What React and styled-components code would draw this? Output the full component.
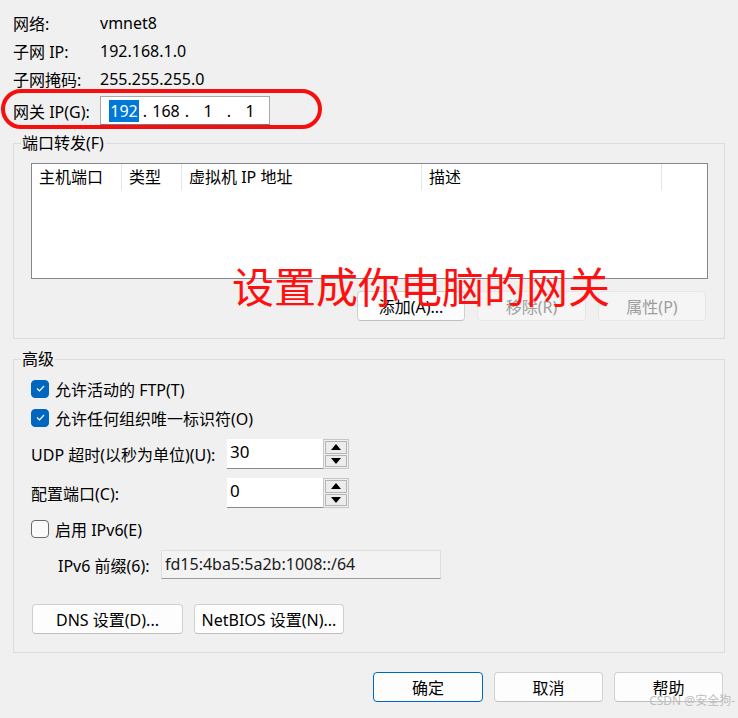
import React from "react";
import styled, { createGlobalStyle } from "styled-components";

const GlobalStyle = createGlobalStyle`
  html, body {
    margin: 0;
    padding: 0;
    background: #f0f0f0;
  }
  body {
    font-family: "Noto Sans", "Noto Sans CJK SC", sans-serif;
    font-size: 16px;
    color: #000;
  }
`;

const Window = styled.div`
  position: relative;
  width: 738px;
  height: 718px;
  box-sizing: border-box;
  padding: 9px 13px 0 13px;
  background: #f0f0f0;
  overflow: hidden;
`;

/** 상단 정보 영역 */
const InfoGrid = styled.div`
  display: grid;
  grid-template-columns: 87px auto;
  grid-auto-rows: 28px;
  align-items: center;
`;

const GatewayRow = styled.div`
  display: grid;
  grid-template-columns: 87px auto;
  align-items: center;
  height: 29px;
  margin-top: 3px;
`;

const IpField = styled.div`
  width: 170px;
  height: 29px;
  box-sizing: border-box;
  background: #fff;
  border: 1px solid #a8a8a8;
  border-bottom-color: #7a7a7a;
  display: flex;
  align-items: center;
  padding-left: 6px;
`;

const IpSeg = styled.span`
  width: 34px;
  text-align: center;
  line-height: 20px;
`;

const IpDot = styled.span`
  width: 8px;
  text-align: center;
  line-height: 20px;
`;

const Selected = styled.span`
  background: #0078d7;
  color: #fff;
  padding: 0 1px;
`;

/** 그룹 박스 */
const Group = styled.fieldset`
  margin: ${(p) => p.$top}px 0 0 0;
  padding: 0;
  border: 1px solid #dcdcdc;
  min-width: 0;

  legend {
    margin-left: 7px;
    padding: 0 1px;
    line-height: 20px;
  }
`;

const GroupBody = styled.div`
  padding: ${(p) => p.$pad};
`;

const ListView = styled.div`
  height: 116px;
  box-sizing: border-box;
  background: #fff;
  border: 1px solid #86868e;
`;

const ListHead = styled.div`
  display: flex;
  height: 26px;
`;

const HeadCell = styled.div`
  width: ${(p) => p.$w}px;
  box-sizing: border-box;
  padding-left: 7px;
  border-right: 1px solid #e5e5e5;
  line-height: 26px;
  white-space: nowrap;
`;

const ButtonRow = styled.div`
  display: flex;
  justify-content: ${(p) => p.$justify || "flex-end"};
  gap: ${(p) => p.$gap || 12}px;
  margin-top: ${(p) => p.$top || 0}px;
  padding: ${(p) => p.$pad || "0"};
`;

const Button = styled.button`
  width: ${(p) => p.$w}px;
  height: 30px;
  box-sizing: border-box;
  font-family: inherit;
  font-size: 16px;
  background: ${(p) => (p.disabled ? "#f5f5f5" : "#fdfdfd")};
  color: ${(p) => (p.disabled ? "#9d9d9d" : "#000")};
  border: 1px solid ${(p) => (p.$primary ? "#0067c0" : p.disabled ? "#e6e6e6" : "#d0d0d0")};
  border-bottom-color: ${(p) => (p.$primary ? "#0067c0" : p.disabled ? "#e6e6e6" : "#c0c0c0")};
  border-radius: 4px;
  padding: 0;
`;

/** 고급 설정 */
const CheckRow = styled.div`
  display: flex;
  align-items: center;
  gap: 6px;
  height: 29px;
  margin-top: ${(p) => p.$top || 0}px;
`;

const Box = styled.span`
  width: 18px;
  height: 18px;
  box-sizing: border-box;
  border-radius: 4px;
  display: flex;
  align-items: center;
  justify-content: center;
  background: ${(p) => (p.$checked ? "#0067c0" : "#fafafa")};
  border: 1px solid ${(p) => (p.$checked ? "#0067c0" : "#6a6a6a")};
`;

const FieldRow = styled.div`
  display: grid;
  grid-template-columns: ${(p) => p.$label}px auto;
  align-items: center;
  height: 29px;
  margin-top: ${(p) => p.$top}px;
  padding-left: ${(p) => p.$indent || 0}px;
`;

const Spinner = styled.div`
  display: flex;
  height: 30px;
`;

const SpinInput = styled.div`
  width: 96px;
  box-sizing: border-box;
  background: #fff;
  border-bottom: 1px solid #8a8a8a;
  padding: 1px 0 0 3px;
  font-size: 17px;
  line-height: 24px;
`;

const SpinBox = styled.div`
  width: 26px;
  box-sizing: border-box;
  border: 1px solid #c6c6c6;
  display: flex;
  flex-direction: column;
  gap: 1px;
  padding: 1px;
`;

const SpinBtn = styled.div`
  flex: 1;
  border: 1px solid #b4b4b4;
  background: #ececec;
  display: flex;
  align-items: center;
  justify-content: center;
`;

const PrefixField = styled.div`
  width: 280px;
  height: 29px;
  box-sizing: border-box;
  background: #f3f3f3;
  border: 1px solid #dedede;
  border-bottom-color: #9a9a9a;
  padding: 1px 0 0 3px;
  line-height: 24px;
  color: #1a1a1a;
`;

/** 주석(빨간 표시) */
const Mark = styled.div`
  position: absolute;
  left: 1px;
  top: 89px;
  width: 321px;
  height: 40px;
  box-sizing: border-box;
  border: 4px solid #f50f0f;
  border-radius: 20px;
  pointer-events: none;
`;

const Note = styled.div`
  position: absolute;
  left: 232px;
  top: 266px;
  font-size: 42px;
  line-height: 42px;
  color: #ff1010;
  white-space: nowrap;
`;

const Watermark = styled.div`
  position: absolute;
  right: 3px;
  bottom: 9px;
  font-size: 12px;
  color: #bdbdbd;
  white-space: nowrap;
`;

const Arrow = ({ up }) => (
  <svg width="10" height="6" viewBox="0 0 10 6">
    <path d={up ? "M0 6 L5 0 L10 6 Z" : "M0 0 L5 6 L10 0 Z"} fill="#000" />
  </svg>
);

const Check = ({ checked }) => (
  <Box $checked={checked}>
    {checked && (
      <svg width="9" height="7" viewBox="0 0 9 7">
        <path d="M1 3.5 L3.5 6 L8 1" fill="none" stroke="#fff" strokeWidth="1.2" />
      </svg>
    )}
  </Box>
);

const Spin = ({ value }) => (
  <Spinner>
    <SpinInput>{value}</SpinInput>
    <SpinBox>
      <SpinBtn>
        <Arrow up />
      </SpinBtn>
      <SpinBtn>
        <Arrow />
      </SpinBtn>
    </SpinBox>
  </Spinner>
);

export default function App() {
  return (
    <Window>
      <GlobalStyle />

      <InfoGrid>
        <span>网络:</span>
        <span>vmnet8</span>
        <span>子网 IP:</span>
        <span>192.168.1.0</span>
        <span>子网掩码:</span>
        <span>255.255.255.0</span>
      </InfoGrid>

      <GatewayRow>
        <span>网关 IP(G):</span>
        <IpField>
          <IpSeg>
            <Selected>192</Selected>
          </IpSeg>
          <IpDot>.</IpDot>
          <IpSeg>168</IpSeg>
          <IpDot>.</IpDot>
          <IpSeg>1</IpSeg>
          <IpDot>.</IpDot>
          <IpSeg>1</IpSeg>
        </IpField>
      </GatewayRow>

      <Group $top={8}>
        <legend>端口转发(F)</legend>
        <GroupBody $pad="10px 16px 17px 17px">
          <ListView>
            <ListHead>
              <HeadCell $w={90}>主机端口</HeadCell>
              <HeadCell $w={60}>类型</HeadCell>
              <HeadCell $w={240}>虚拟机 IP 地址</HeadCell>
              <HeadCell $w={240}>描述</HeadCell>
            </ListHead>
          </ListView>
          <ButtonRow $top={12} $pad="0 2px 0 0">
            <Button $w={108}>添加(A)...</Button>
            <Button $w={109} disabled>
              移除(R)
            </Button>
            <Button $w={108} disabled>
              属性(P)
            </Button>
          </ButtonRow>
        </GroupBody>
      </Group>

      <Group $top={10}>
        <legend>高级</legend>
        <GroupBody $pad="5px 16px 18px 17px">
          <CheckRow>
            <Check checked />
            <span>允许活动的 FTP(T)</span>
          </CheckRow>
          <CheckRow>
            <Check checked />
            <span>允许任何组织唯一标识符(O)</span>
          </CheckRow>

          <FieldRow $label={196} $top={7}>
            <span>UDP 超时(以秒为单位)(U):</span>
            <Spin value="30" />
          </FieldRow>
          <FieldRow $label={196} $top={10}>
            <span>配置端口(C):</span>
            <Spin value="0" />
          </FieldRow>

          <CheckRow $top={7}>
            <Check />
            <span>启用 IPv6(E)</span>
          </CheckRow>

          <FieldRow $label={103} $top={7} $indent={27}>
            <span>IPv6 前缀(6):</span>
            <PrefixField>fd15:4ba5:5a2b:1008::/64</PrefixField>
          </FieldRow>

          <ButtonRow $justify="flex-start" $gap={11} $top={25} $pad="0 0 0 1px">
            <Button $w={151}>DNS 设置(D)...</Button>
            <Button $w={150}>NetBIOS 设置(N)...</Button>
          </ButtonRow>
        </GroupBody>
      </Group>

      <ButtonRow $top={19} $gap={11} $pad="0 2px 0 0">
        <Button $w={110} $primary>
          确定
        </Button>
        <Button $w={109}>取消</Button>
        <Button $w={109}>帮助</Button>
      </ButtonRow>

      <Mark />
      <Note>设置成你电脑的网关</Note>
      <Watermark>CSDN @安全狗-</Watermark>
    </Window>
  );
}
